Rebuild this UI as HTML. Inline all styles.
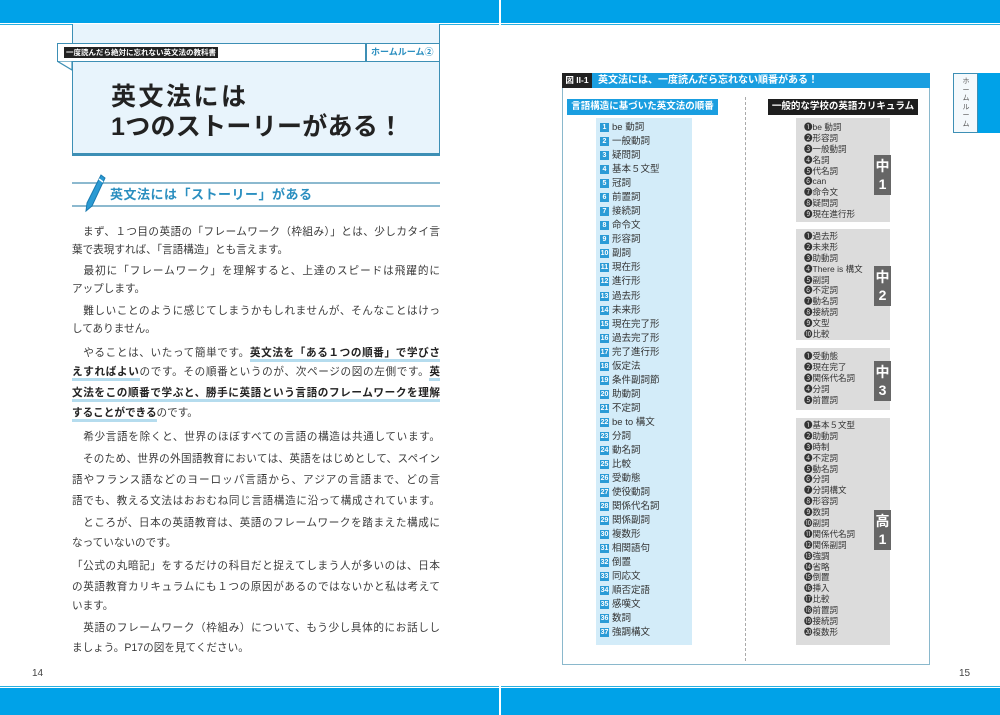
<!DOCTYPE html>
<html><head><meta charset="utf-8">
<style>
*{margin:0;padding:0;box-sizing:border-box}
body{width:1000px;height:715px;position:relative;background:#fff;font-family:"Liberation Sans","Noto Sans CJK JP",sans-serif;color:#333;overflow:hidden}
.a{position:absolute}
.ln{position:absolute;left:72px;width:368px;font-size:10.6px;line-height:16px;white-space:nowrap;color:#3a3a3a}
.full{text-align:justify;text-align-last:justify}
.ln b{font-weight:bold;color:#222;border-bottom:3px solid #b5dcee}
.li{position:absolute;left:600px;font-size:9.5px;line-height:11px;color:#333;white-space:nowrap}
.li i{display:inline-block;font-style:normal;background:#2b9bd6;color:#fff;font-size:7px;width:9px;height:9px;line-height:9px;text-align:center;margin-right:3px;vertical-align:1px;font-weight:bold}
.gb{position:absolute;left:796px;width:94px;background:#dcdcdc;padding-left:8px;font-size:8.5px;color:#333}
.gb div{height:10.9px;line-height:10.9px;white-space:nowrap}
.gt{position:absolute;left:874px;width:17px;background:#666;color:#fff;font-weight:bold;font-size:14px;line-height:18px;text-align:center;padding:2px 0}
</style></head><body>
<div class="a" style="left:0;top:0;width:499px;height:23px;background:#00a2e8"></div>
<div class="a" style="left:501px;top:0;width:499px;height:23px;background:#00a2e8"></div>
<div class="a" style="left:0;top:24px;width:499px;height:1px;background:#2ab0e0"></div>
<div class="a" style="left:501px;top:24px;width:499px;height:1px;background:#2ab0e0"></div>
<div class="a" style="left:0;top:686px;width:499px;height:1px;background:#2ab0e0"></div>
<div class="a" style="left:501px;top:686px;width:499px;height:1px;background:#2ab0e0"></div>
<div class="a" style="left:0;top:688px;width:499px;height:27px;background:#00a2e8"></div>
<div class="a" style="left:501px;top:688px;width:499px;height:27px;background:#00a2e8"></div>

<div class="a" style="left:72px;top:24px;width:368px;height:132px;background:#e8f4fc;border-left:1.5px solid #3d8fb5;border-right:1.5px solid #3d8fb5;border-bottom:3px solid #3d8fb5"></div>
<div class="a" style="left:57px;top:43px;width:383px;height:19px;background:#fff;border:1.5px solid #3d8fb5"></div>
<svg class="a" style="left:57px;top:61px" width="16" height="10"><path d="M0 0 L15 0 L15 9 Z" fill="#fff" stroke="#3d8fb5" stroke-width="1.2"/></svg>
<div class="a" style="left:64px;top:47px;height:11px;background:#222;color:#fff;font-size:7.5px;line-height:11px;padding:0 2px;font-weight:bold">一度読んだら絶対に忘れない英文法の教科書</div>
<div class="a" style="left:365px;top:43px;width:1.5px;height:19px;background:#3d8fb5"></div>
<div class="a" style="left:371px;top:45px;font-size:9px;line-height:15px;color:#2b8fc0;font-weight:bold">ホームルーム②</div>
<div class="a" style="left:111px;top:82px;font-size:25px;line-height:30px;font-weight:bold;color:#222;letter-spacing:2.5px">英文法には</div>
<div class="a" style="left:111px;top:112px;font-size:25px;line-height:30px;font-weight:bold;color:#222;letter-spacing:0.3px">1つのストーリーがある！</div>

<div class="a" style="left:72px;top:182px;width:368px;height:2px;background:#8cb9cf"></div>
<div class="a" style="left:72px;top:205px;width:368px;height:2px;background:#8cb9cf"></div>
<svg class="a" style="left:82px;top:173px" width="24" height="42"><path d="M19 2 L23 5 L10 33 L4 38 L5 30 Z" fill="#2a9ad3" stroke="#1a7ab0" stroke-width="1"/><path d="M17 6 L21 9" stroke="#fff" stroke-width="1.5"/></svg>
<div class="a" style="left:110px;top:186px;font-size:13px;line-height:18px;color:#2b8fc0;font-weight:bold;letter-spacing:0.5px">英文法には「ストーリー」がある</div>

<div class="ln full" style="top:224px">　まず、１つ目の英語の「フレームワーク（枠組み）」とは、少しカタイ言</div>
<div class="ln" style="top:242px">葉で表現すれば、「言語構造」とも言えます。</div>
<div class="ln full" style="top:263px">　最初に「フレームワーク」を理解すると、上達のスピードは飛躍的に</div>
<div class="ln" style="top:281px">アップします。</div>
<div class="ln full" style="top:303px">　難しいことのように感じてしまうかもしれませんが、そんなことはけっ</div>
<div class="ln" style="top:321px">してありません。</div>
<div class="ln full" style="top:345px">　やることは、いたって簡単です。<b>英文法を「ある１つの順番」で学びさ</b></div>
<div class="ln full" style="top:364px"><b>えすればよい</b>のです。その順番というのが、次ページの図の左側です。<b>英</b></div>
<div class="ln full" style="top:385px"><b>文法をこの順番で学ぶと、勝手に英語という言語のフレームワークを理解</b></div>
<div class="ln" style="top:405px"><b>することができる</b>のです。</div>
<div class="ln full" style="top:429px">　希少言語を除くと、世界のほぼすべての言語の構造は共通しています。</div>
<div class="ln full" style="top:451px">　そのため、世界の外国語教育においては、英語をはじめとして、スペイン</div>
<div class="ln full" style="top:472px">語やフランス語などのヨーロッパ言語から、アジアの言語まで、どの言</div>
<div class="ln full" style="top:493px">語でも、教える文法はおおむね同じ言語構造に沿って構成されています。</div>
<div class="ln full" style="top:515px">　ところが、日本の英語教育は、英語のフレームワークを踏まえた構成に</div>
<div class="ln" style="top:535px">なっていないのです。</div>
<div class="ln full" style="top:558px">「公式の丸暗記」をするだけの科目だと捉えてしまう人が多いのは、日本</div>
<div class="ln full" style="top:579px">の英語教育カリキュラムにも１つの原因があるのではないかと私は考えて</div>
<div class="ln" style="top:598px">います。</div>
<div class="ln full" style="top:620px">　英語のフレームワーク（枠組み）について、もう少し具体的にお話しし</div>
<div class="ln" style="top:640px">ましょう。P17の図を見てください。</div>

<div class="a" style="left:32px;top:668px;font-size:10px;color:#444">14</div>
<div class="a" style="left:959px;top:668px;font-size:10px;color:#444">15</div>

<div class="a" style="left:953px;top:73px;width:25px;height:60px;background:#f4f9fc;border:1px solid #3d8fb5"></div>
<div class="a" style="left:978px;top:73px;width:22px;height:60px;background:#00a2e8"></div>
<div class="a" style="left:960px;top:78px;width:12px;font-size:7px;line-height:8.5px;color:#555;text-align:center">ホ<br>ー<br>ム<br>ル<br>ー<br>ム</div>

<div class="a" style="left:562px;top:73px;width:368px;height:592px;border:1px solid #8ab8cc;background:#fff"></div>
<div class="a" style="left:562px;top:73px;width:368px;height:15px;background:#1a9ee0"></div>
<div class="a" style="left:562px;top:73px;width:30px;height:15px;background:#222;color:#fff;font-size:8.5px;line-height:15px;font-weight:bold;text-align:center">図 II-1</div>
<div class="a" style="left:598px;top:73px;font-size:10px;line-height:15px;color:#fff;font-weight:bold">英文法には、一度読んだら忘れない順番がある！</div>
<div class="a" style="left:567px;top:99px;width:151px;height:16px;background:#1a9ee0;color:#fff;font-size:9.5px;line-height:16px;font-weight:bold;text-align:center">言語構造に基づいた英文法の順番</div>
<div class="a" style="left:768px;top:99px;width:150px;height:16px;background:#1e1e1e;color:#fff;font-size:9.5px;line-height:16px;font-weight:bold;text-align:center">一般的な学校の英語カリキュラム</div>
<div class="a" style="left:745px;top:97px;width:0;height:564px;border-left:1px dashed #aaa"></div>
<div class="a" style="left:596px;top:118px;width:96px;height:527px;background:#d3ecf9"></div>

<div class="li" style="top:122px"><i>1</i>be 動詞</div>
<div class="li" style="top:136px"><i>2</i>一般動詞</div>
<div class="li" style="top:150px"><i>3</i>疑問詞</div>
<div class="li" style="top:164px"><i>4</i>基本５文型</div>
<div class="li" style="top:178px"><i>5</i>冠詞</div>
<div class="li" style="top:192px"><i>6</i>前置詞</div>
<div class="li" style="top:206px"><i>7</i>接続詞</div>
<div class="li" style="top:220px"><i>8</i>命令文</div>
<div class="li" style="top:234px"><i>9</i>形容詞</div>
<div class="li" style="top:248px"><i>10</i>副詞</div>
<div class="li" style="top:262px"><i>11</i>現在形</div>
<div class="li" style="top:276px"><i>12</i>進行形</div>
<div class="li" style="top:291px"><i>13</i>過去形</div>
<div class="li" style="top:305px"><i>14</i>未来形</div>
<div class="li" style="top:319px"><i>15</i>現在完了形</div>
<div class="li" style="top:333px"><i>16</i>過去完了形</div>
<div class="li" style="top:347px"><i>17</i>完了進行形</div>
<div class="li" style="top:361px"><i>18</i>仮定法</div>
<div class="li" style="top:375px"><i>19</i>条件副詞節</div>
<div class="li" style="top:389px"><i>20</i>助動詞</div>
<div class="li" style="top:403px"><i>21</i>不定詞</div>
<div class="li" style="top:417px"><i>22</i>be to 構文</div>
<div class="li" style="top:431px"><i>23</i>分詞</div>
<div class="li" style="top:445px"><i>24</i>動名詞</div>
<div class="li" style="top:459px"><i>25</i>比較</div>
<div class="li" style="top:473px"><i>26</i>受動態</div>
<div class="li" style="top:487px"><i>27</i>使役動詞</div>
<div class="li" style="top:501px"><i>28</i>関係代名詞</div>
<div class="li" style="top:515px"><i>29</i>関係副詞</div>
<div class="li" style="top:529px"><i>30</i>複数形</div>
<div class="li" style="top:543px"><i>31</i>相関語句</div>
<div class="li" style="top:557px"><i>32</i>倒置</div>
<div class="li" style="top:571px"><i>33</i>同応文</div>
<div class="li" style="top:585px"><i>34</i>順否定語</div>
<div class="li" style="top:599px"><i>35</i>感嘆文</div>
<div class="li" style="top:613px"><i>36</i>数詞</div>
<div class="li" style="top:627px"><i>37</i>強調構文</div>

<div class="gb" style="top:118px;height:104px;padding-top:4px">
<div>❶be 動詞</div><div>❷形容詞</div><div>❸一般動詞</div><div>❹名詞</div><div>❺代名詞</div><div>❻can</div><div>❼命令文</div><div>❽疑問詞</div><div>❾現在進行形</div></div>
<div class="gt" style="top:155px">中<br>1</div>
<div class="gb" style="top:229px;height:111px;padding-top:2px">
<div>❶過去形</div><div>❷未来形</div><div>❸助動詞</div><div>❹There is 構文</div><div>❺副詞</div><div>❻不定詞</div><div>❼動名詞</div><div>❽接続詞</div><div>❾文型</div><div>❿比較</div></div>
<div class="gt" style="top:266px">中<br>2</div>
<div class="gb" style="top:348px;height:62px;padding-top:3px">
<div>❶受動態</div><div>❷現在完了</div><div>❸関係代名詞</div><div>❹分詞</div><div>❺前置詞</div></div>
<div class="gt" style="top:361px">中<br>3</div>
<div class="gb" style="top:418px;height:227px;padding-top:2px">
<div>❶基本５文型</div><div>❷助動詞</div><div>❸時制</div><div>❹不定詞</div><div>❺動名詞</div><div>❻分詞</div><div>❼分詞構文</div><div>❽形容詞</div><div>❾数詞</div><div>❿副詞</div><div>⓫関係代名詞</div><div>⓬関係副詞</div><div>⓭強調</div><div>⓮省略</div><div>⓯倒置</div><div>⓰挿入</div><div>⓱比較</div><div>⓲前置詞</div><div>⓳接続詞</div><div>⓴複数形</div></div>
<div class="gt" style="top:510px">高<br>1</div>
</body></html>
